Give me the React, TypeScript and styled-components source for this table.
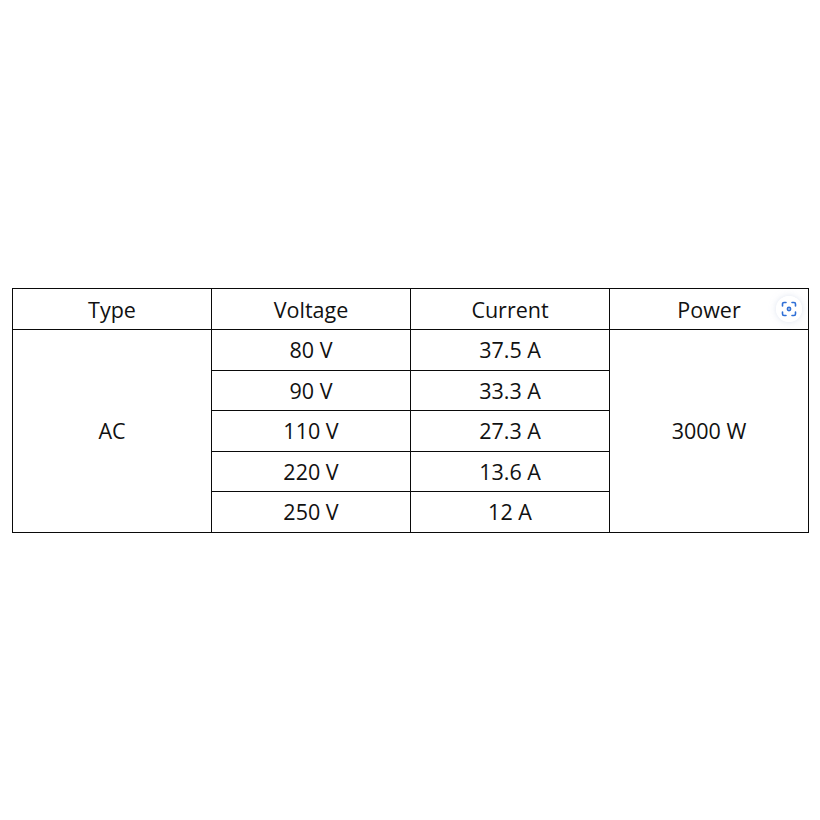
import styled, { createGlobalStyle } from 'styled-components';

const GlobalStyle = createGlobalStyle`
  html, body {
    margin: 0;
    padding: 0;
    background: #ffffff;
  }
`;

const Page = styled.div`
  width: 820px;
  height: 820px;
  box-sizing: border-box;
  padding: 288px 11px 0 12px;
  font-family: "Open Sans", "Noto Sans", "Liberation Sans", sans-serif;
  color: #111111;
`;

const Table = styled.table`
  position: relative;
  width: 797px;
  border-collapse: collapse;
  table-layout: fixed;
  font-size: 21.5px;
`;

const HeadCell = styled.th`
  position: relative;
  height: 40px;
  padding: 0;
  border: 1px solid #0a0a0a;
  font-weight: 400;
  text-align: center;
  vertical-align: middle;
`;

const Cell = styled.td`
  height: 39.5px;
  padding: 0;
  border: 1px solid #0a0a0a;
  text-align: center;
  vertical-align: middle;
`;

const ScanBadge = styled.span`
  position: absolute;
  right: 6px;
  top: 50%;
  width: 26px;
  height: 26px;
  margin-top: -13px;
  border-radius: 50%;
  background: rgba(255, 255, 255, 0.9);
  box-shadow: 0 0 6px rgba(200, 210, 230, 0.6);
  display: flex;
  align-items: center;
  justify-content: center;
`;

const rows = [
  { voltage: '80 V', current: '37.5 A' },
  { voltage: '90 V', current: '33.3 A' },
  { voltage: '110 V', current: '27.3 A' },
  { voltage: '220 V', current: '13.6 A' },
  { voltage: '250 V', current: '12 A' },
];

function ScanIcon() {
  return (
    <svg width="16" height="16" viewBox="0 0 16 16" fill="none" stroke="#2f6fd6" strokeWidth="1.6" strokeLinecap="round">
      <path d="M1.5 5V3a1.5 1.5 0 0 1 1.5-1.5h2" />
      <path d="M11 1.5h2A1.5 1.5 0 0 1 14.5 3v2" />
      <path d="M14.5 11v2a1.5 1.5 0 0 1-1.5 1.5h-2" />
      <path d="M5 14.5H3A1.5 1.5 0 0 1 1.5 13v-2" />
      <circle cx="8" cy="8" r="1.6" />
    </svg>
  );
}

export default function App() {
  return (
    <>
      <GlobalStyle />
      <Page>
        <Table>
          <thead>
            <tr>
              <HeadCell>Type</HeadCell>
              <HeadCell>Voltage</HeadCell>
              <HeadCell>Current</HeadCell>
              <HeadCell>
                Power
                <ScanBadge>
                  <ScanIcon />
                </ScanBadge>
              </HeadCell>
            </tr>
          </thead>
          <tbody>
            {rows.map((row, i) => (
              <tr key={row.voltage}>
                {i === 0 && <Cell rowSpan={rows.length}>AC</Cell>}
                <Cell>{row.voltage}</Cell>
                <Cell>{row.current}</Cell>
                {i === 0 && <Cell rowSpan={rows.length}>3000 W</Cell>}
              </tr>
            ))}
          </tbody>
        </Table>
      </Page>
    </>
  );
}
